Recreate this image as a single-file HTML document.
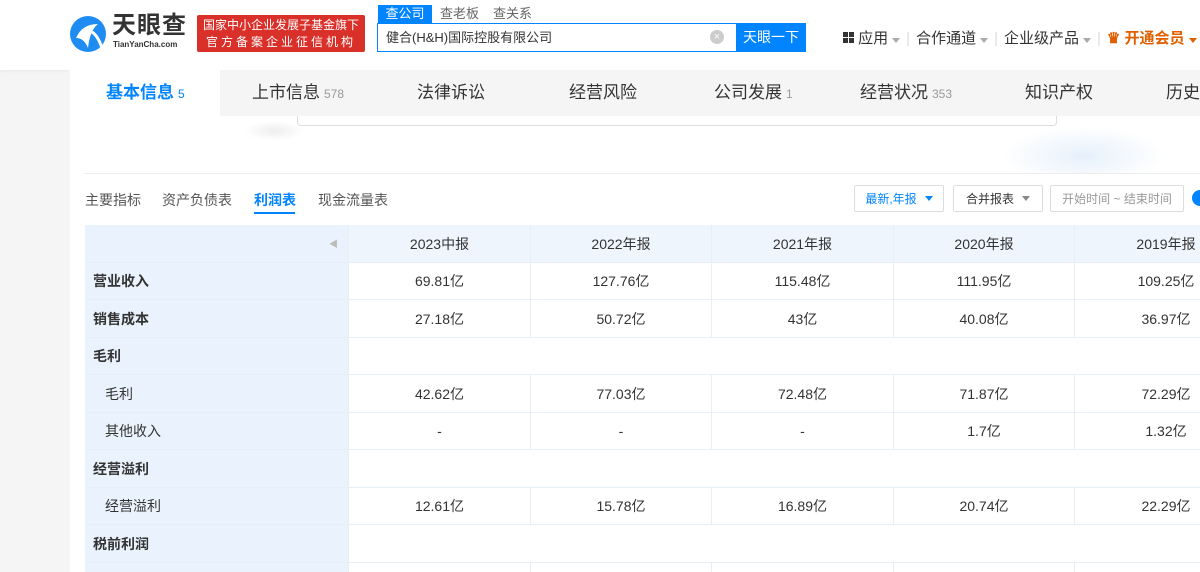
<!DOCTYPE html>
<html><head><meta charset="utf-8"><style>
*{margin:0;padding:0;box-sizing:border-box}
html,body{width:1200px;height:572px;overflow:hidden}
body{background:#f5f5f5;font-family:"Liberation Sans","Noto Sans CJK SC",sans-serif;color:#333;position:relative}
.a{position:absolute}
.hdr{left:0;top:0;width:1200px;height:70px;background:#fff;box-shadow:0 1px 3px rgba(0,0,0,.06)}
.tabs{left:68px;top:70px;width:1132px;height:46px;background:#f5f5f5}
.tab{top:0;height:46px;line-height:46px;font-size:17px;color:#333}
.tab small{font-size:12px;color:#999;margin-left:4px}
.main{left:70px;top:116px;width:1130px;height:456px;background:#fff}
.row{position:absolute;left:85px;width:1115px;border-bottom:1px solid #e8eef5}
.cell{position:absolute;top:0;height:100%;display:flex;align-items:center;justify-content:center;font-size:14px;color:#333}
.lbl{position:absolute;left:0;width:264px;height:100%;background:#eaf3fd;display:flex;align-items:center;font-size:14px;border-right:1px solid #e8eef5}
.btn{top:185px;height:27px;border:1px solid #ddd;border-radius:2px;font-size:12px;display:flex;align-items:center;justify-content:center;background:#fff}
.tri{display:inline-block;width:0;height:0;border-left:4px solid transparent;border-right:4px solid transparent;border-top:5px solid #888;margin-left:8px}
</style></head><body>
<div class="a hdr"></div>
<svg class="a" style="left:68px;top:14px" width="44" height="40" viewBox="0 0 44 40"><circle cx="20" cy="20" r="18" fill="#1e8cf0"/><path d="M8 24 Q14 10 30 10 Q22 16 20 34 Q16 24 8 24Z" fill="#fff"/><path d="M24 18 Q30 22 34 34" stroke="#fff" stroke-width="3" fill="none"/></svg>
<div class="a" style="left:112px;top:12px;font-size:24px;font-weight:bold;color:#333;letter-spacing:1px;line-height:28px">天眼查</div>
<div class="a" style="left:113px;top:40px;font-size:8px;color:#333;font-weight:bold;line-height:10px">TianYanCha.com</div>
<div class="a" style="left:197px;top:15px;width:168px;height:37px;background:#d9302a;border-radius:2px;color:#fff;font-size:12px;text-align:center;line-height:17px;padding-top:2px">国家中小企业发展子基金旗下<br><span style="letter-spacing:3px">官方备案企业征信机构</span></div>
<div class="a" style="left:378px;top:5px;width:54px;height:18px;background:#0084ff;color:#fff;font-size:13px;text-align:center;line-height:18px">查公司</div>
<div class="a" style="left:440px;top:5px;font-size:13px;color:#666;line-height:18px">查老板</div>
<div class="a" style="left:493px;top:5px;font-size:13px;color:#666;line-height:18px">查关系</div>
<div class="a" style="left:377px;top:23px;width:360px;height:29px;border:1px solid #0084ff;background:#fff;font-size:13px;line-height:27px;padding-left:8px">健合(H&amp;H)国际控股有限公司</div>
<div class="a" style="left:710px;top:30px;width:14px;height:14px;border-radius:50%;background:#ccc;color:#fff;font-size:11px;text-align:center;line-height:14px">×</div>
<div class="a" style="left:736px;top:23px;width:70px;height:29px;background:#0084ff;color:#fff;font-size:14px;text-align:center;line-height:29px">天眼一下</div>
<div class="a" style="left:843px;top:27px;font-size:15px;color:#333;white-space:nowrap">
<span style="display:inline-block;width:11px;height:11px;background:linear-gradient(#333,#333) 0 0/5px 5px no-repeat,linear-gradient(#333,#333) 6px 0/5px 5px no-repeat,linear-gradient(#333,#333) 0 6px/5px 5px no-repeat,linear-gradient(#333,#333) 6px 6px/5px 5px no-repeat"></span> 应用<span class="tri" style="border-top-color:#aaa;margin-left:4px"></span><span style="color:#ddd;margin:0 6px">|</span>合作通道<span class="tri" style="border-top-color:#aaa;margin-left:4px"></span><span style="color:#ddd;margin:0 6px">|</span>企业级产品<span class="tri" style="border-top-color:#aaa;margin-left:4px"></span><span style="color:#ddd;margin:0 6px">|</span><b style="color:#e06000">♛ 开通会员</b><span class="tri" style="border-top-color:#e06000;margin-left:4px"></span></div>

<div class="a tabs"></div>
<div class="a" style="left:70px;top:70px;width:150px;height:46px;background:#fff"></div>
<div class="a tab" style="left:106px;top:70px;color:#0084ff;font-weight:bold">基本信息<small style="color:#0084ff;font-weight:normal">5</small></div>
<div class="a tab" style="left:252px;top:70px">上市信息<small>578</small></div>
<div class="a tab" style="left:417px;top:70px">法律诉讼</div>
<div class="a tab" style="left:569px;top:70px">经营风险</div>
<div class="a tab" style="left:714px;top:70px">公司发展<small>1</small></div>
<div class="a tab" style="left:860px;top:70px">经营状况<small>353</small></div>
<div class="a tab" style="left:1025px;top:70px">知识产权</div>
<div class="a tab" style="left:1166px;top:70px">历史信息</div>

<div class="a main"></div>
<div class="a" style="left:84px;top:116px;width:1116px;height:58px;border-bottom:1px solid #eee;background:radial-gradient(ellipse 30px 10px at 190px 15px,#eee,transparent),radial-gradient(ellipse 80px 30px at 1000px 40px,#e6f0fb,transparent)"></div>
<div class="a" style="left:297px;top:116px;width:760px;height:10px;border:1px solid #ddd;border-top:none;border-radius:0 0 4px 4px;background:#fff"></div>

<div class="a" style="left:85px;top:190px;font-size:14px;color:#555">主要指标</div>
<div class="a" style="left:162px;top:190px;font-size:14px;color:#555">资产负债表</div>
<div class="a" style="left:254px;top:190px;font-size:14px;color:#0084ff;font-weight:bold">利润表</div>
<div class="a" style="left:254px;top:212px;width:41px;height:2px;background:#0084ff"></div>
<div class="a" style="left:318px;top:190px;font-size:14px;color:#555">现金流量表</div>
<div class="a btn" style="left:854px;width:90px;color:#0084ff">最新,年报<span class="tri" style="border-top-color:#0084ff"></span></div>
<div class="a btn" style="left:953px;width:90px;color:#333">合并报表<span class="tri"></span></div>
<div class="a btn" style="left:1050px;width:134px;color:#999">开始时间 ~ 结束时间</div>
<div class="a" style="left:1192px;top:190px;width:16px;height:16px;border-radius:50%;background:#0084ff"></div>

<div class="row" style="top:225px;height:38px;background:#eef5fd">
<div class="lbl" style="justify-content:flex-end;padding-right:10px;color:#bbb;font-size:9px">◀</div>
<div class="cell" style="left:264px;width:182px;border-right:1px solid #e8eef5">2023中报</div>
<div class="cell" style="left:446px;width:181px;border-right:1px solid #e8eef5">2022年报</div>
<div class="cell" style="left:627px;width:182px;border-right:1px solid #e8eef5">2021年报</div>
<div class="cell" style="left:809px;width:181px;border-right:1px solid #e8eef5">2020年报</div>
<div class="cell" style="left:990px;width:182px">2019年报</div>
</div>

<div class="row" style="top:263px;height:37px"><div class="lbl" style="font-weight:bold;padding-left:8px">营业收入</div><div class="cell" style="left:264px;width:182px;border-right:1px solid #e8eef5">69.81亿</div><div class="cell" style="left:446px;width:181px;border-right:1px solid #e8eef5">127.76亿</div><div class="cell" style="left:627px;width:182px;border-right:1px solid #e8eef5">115.48亿</div><div class="cell" style="left:809px;width:181px;border-right:1px solid #e8eef5">111.95亿</div><div class="cell" style="left:990px;width:182px">109.25亿</div></div>
<div class="row" style="top:300px;height:38px"><div class="lbl" style="font-weight:bold;padding-left:8px">销售成本</div><div class="cell" style="left:264px;width:182px;border-right:1px solid #e8eef5">27.18亿</div><div class="cell" style="left:446px;width:181px;border-right:1px solid #e8eef5">50.72亿</div><div class="cell" style="left:627px;width:182px;border-right:1px solid #e8eef5">43亿</div><div class="cell" style="left:809px;width:181px;border-right:1px solid #e8eef5">40.08亿</div><div class="cell" style="left:990px;width:182px">36.97亿</div></div>
<div class="row" style="top:338px;height:37px"><div class="lbl" style="font-weight:bold;padding-left:8px">毛利</div></div>
<div class="row" style="top:375px;height:38px"><div class="lbl" style="padding-left:20px">毛利</div><div class="cell" style="left:264px;width:182px;border-right:1px solid #e8eef5">42.62亿</div><div class="cell" style="left:446px;width:181px;border-right:1px solid #e8eef5">77.03亿</div><div class="cell" style="left:627px;width:182px;border-right:1px solid #e8eef5">72.48亿</div><div class="cell" style="left:809px;width:181px;border-right:1px solid #e8eef5">71.87亿</div><div class="cell" style="left:990px;width:182px">72.29亿</div></div>
<div class="row" style="top:413px;height:37px"><div class="lbl" style="padding-left:20px">其他收入</div><div class="cell" style="left:264px;width:182px;border-right:1px solid #e8eef5">-</div><div class="cell" style="left:446px;width:181px;border-right:1px solid #e8eef5">-</div><div class="cell" style="left:627px;width:182px;border-right:1px solid #e8eef5">-</div><div class="cell" style="left:809px;width:181px;border-right:1px solid #e8eef5">1.7亿</div><div class="cell" style="left:990px;width:182px">1.32亿</div></div>
<div class="row" style="top:450px;height:38px"><div class="lbl" style="font-weight:bold;padding-left:8px">经营溢利</div></div>
<div class="row" style="top:488px;height:37px"><div class="lbl" style="padding-left:20px">经营溢利</div><div class="cell" style="left:264px;width:182px;border-right:1px solid #e8eef5">12.61亿</div><div class="cell" style="left:446px;width:181px;border-right:1px solid #e8eef5">15.78亿</div><div class="cell" style="left:627px;width:182px;border-right:1px solid #e8eef5">16.89亿</div><div class="cell" style="left:809px;width:181px;border-right:1px solid #e8eef5">20.74亿</div><div class="cell" style="left:990px;width:182px">22.29亿</div></div>
<div class="row" style="top:525px;height:38px"><div class="lbl" style="font-weight:bold;padding-left:8px">税前利润</div></div>
<div class="row" style="top:563px;height:9px;border:none"><div class="lbl"></div><div class="cell" style="left:264px;width:182px;border-right:1px solid #e8eef5"></div><div class="cell" style="left:446px;width:181px;border-right:1px solid #e8eef5"></div><div class="cell" style="left:627px;width:182px;border-right:1px solid #e8eef5"></div><div class="cell" style="left:809px;width:181px;border-right:1px solid #e8eef5"></div></div>
</body></html>
